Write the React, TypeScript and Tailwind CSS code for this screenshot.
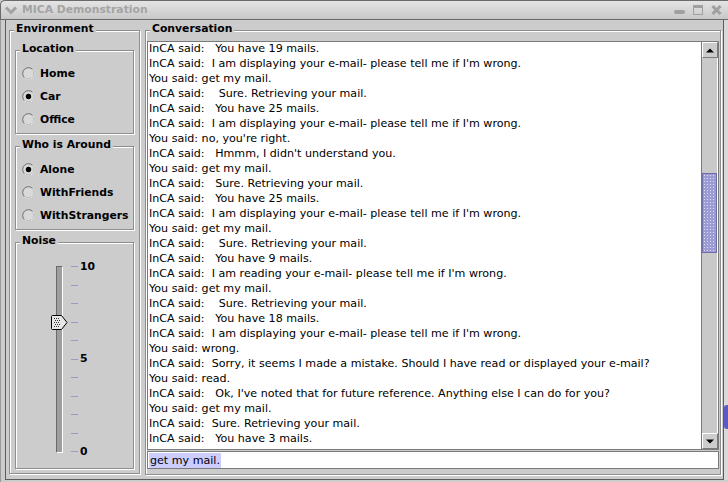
import React from "react";

const LINES = [
  "InCA said:   You have 19 mails.",
  "InCA said:  I am displaying your e-mail- please tell me if I'm wrong.",
  "You said: get my mail.",
  "InCA said:    Sure. Retrieving your mail.",
  "InCA said:   You have 25 mails.",
  "InCA said:  I am displaying your e-mail- please tell me if I'm wrong.",
  "You said: no, you're right.",
  "InCA said:   Hmmm, I didn't understand you.",
  "You said: get my mail.",
  "InCA said:   Sure. Retrieving your mail.",
  "InCA said:   You have 25 mails.",
  "InCA said:  I am displaying your e-mail- please tell me if I'm wrong.",
  "You said: get my mail.",
  "InCA said:    Sure. Retrieving your mail.",
  "InCA said:   You have 9 mails.",
  "InCA said:  I am reading your e-mail- please tell me if I'm wrong.",
  "You said: get my mail.",
  "InCA said:    Sure. Retrieving your mail.",
  "InCA said:   You have 18 mails.",
  "InCA said:  I am displaying your e-mail- please tell me if I'm wrong.",
  "You said: wrong.",
  "InCA said:  Sorry, it seems I made a mistake. Should I have read or displayed your e-mail?",
  "You said: read.",
  "InCA said:   Ok, I've noted that for future reference. Anything else I can do for you?",
  "You said: get my mail.",
  "InCA said:  Sure. Retrieving your mail.",
  "InCA said:   You have 3 mails.",
];

const TICKS = [10, 9, 8, 7, 6, 5, 4, 3, 2, 1, 0];

function Group({
  title,
  className = "",
  children,
}: {
  title: string;
  className?: string;
  children?: React.ReactNode;
}) {
  return (
    <div
      className={`relative border border-[#8e8e8e] shadow-[1px_1px_0_#fff,inset_1px_1px_0_#fff] ${className}`}
    >
      <span className="absolute left-[4px] top-[-9px] bg-[#cccccc] px-[2px] text-[10.8px] font-bold leading-[14px] whitespace-nowrap">
        {title}
      </span>
      {children}
    </div>
  );
}

function Radio({ label, checked }: { label: string; checked?: boolean }) {
  return (
    <div className="flex h-[23px] items-center gap-[5px] pl-[6px]">
      <svg width="13" height="13" viewBox="0 0 13 13">
        <circle cx="6.5" cy="6.5" r="5.8" fill="#d9d9d9" stroke="#6e6e6e" strokeWidth="1" />
        <path d="M10.7 2.3 A5.9 5.9 0 0 1 2.3 10.7" fill="none" stroke="#f4f4f4" strokeWidth="0.9" />
        {checked && <circle cx="6.5" cy="6.5" r="2.7" fill="#000" />}
      </svg>
      <span className="text-[10.8px] font-bold leading-[14px]">{label}</span>
    </div>
  );
}

function Slider() {
  return (
    <div className="flex pl-[40px] pt-[23px]">
      <div className="relative h-[187px] w-[7px] border-t border-l border-[#6a6a6a] border-r-white border-b-white border-r border-b bg-[#9e9e9e]">
        <svg
          className="absolute left-[-6px] top-[48px]"
          width="17"
          height="16"
          viewBox="0 0 17 16"
        >
          <path d="M0.5 1.5 Q0.5 0.5 1.5 0.5 H10.5 L16 7.5 L10.5 14.5 H1.5 Q0.5 14.5 0.5 13.5 Z" fill="#e6e6e6" stroke="#000" />
          {[3, 5, 7].map((x) =>
            [3, 5, 7, 9, 11].map((y) => (
              <rect key={`${x}-${y}`} x={x + (y % 4 === 1 ? 1 : 0)} y={y} width="1" height="1" fill="#333" />
            ))
          )}
        </svg>
      </div>
      <div className="ml-[8px] flex h-[186px] flex-col justify-between">
        {TICKS.map((t) => (
          <div key={t} className="flex h-px items-center gap-[2px]">
            <div className="h-px w-[7px] bg-[#9a9ac8]" />
            {t % 5 === 0 && (
              <span className="text-[10.8px] font-bold leading-[14px]">{t}</span>
            )}
          </div>
        ))}
      </div>
    </div>
  );
}

function Arrow({ up }: { up?: boolean }) {
  return (
    <div className="flex h-[16px] w-[16px] shrink-0 items-center justify-center border-t border-l border-white border-r border-b border-r-[#7a7a7a] border-b-[#7a7a7a] bg-[#cccccc]">
      <svg width="8" height="5" viewBox="0 0 8 5">
        <path d={up ? "M0 4.5 L4 0.5 L8 4.5 Z" : "M0 0.5 L4 4.5 L8 0.5 Z"} fill="#000" />
      </svg>
    </div>
  );
}

function ScrollBar() {
  return (
    <div className="flex w-[17px] shrink-0 flex-col border-l border-[#7a7a7a] bg-[#c9c9c9]">
      <Arrow up />
      <div className="flex flex-1 flex-col border-r border-white">
        <div className="h-[115px]" />
        <div className="h-[80px] border border-[#6f6fa8] bg-[#9c9cd2] bg-[radial-gradient(circle,#dcdcff_0.7px,transparent_0.9px)] bg-[length:3px_3px]" />
      </div>
      <Arrow />
    </div>
  );
}

export default function App() {
  return (
    <div className="flex h-[482px] w-[728px] flex-col overflow-hidden bg-[#cccccc] font-['DejaVu_Sans',sans-serif] text-black">
      <div className="flex h-[20px] shrink-0 items-center rounded-tl-[5px] border-t border-l border-b border-[#6a6a6a] bg-gradient-to-b from-[#e4e4e4] to-[#c8c8c8] pl-[3px] pr-[6px]">
        <svg width="14" height="10" viewBox="0 0 14 10">
          <path d="M2 2.5 L7 7.5 L12 2.5" fill="none" stroke="#a2a2a2" strokeWidth="3" />
        </svg>
        <span className="ml-[4px] text-[10.8px] font-bold leading-[14px] text-[#a4a4a4]">
          MICA Demonstration
        </span>
        <div className="ml-auto flex items-center gap-[8px]">
          <div className="mt-[4px] h-[4px] w-[11px] rounded-full bg-[#a0a0a0]" />
          <div className="h-[10px] w-[10px] border border-t-[3px] border-[#a0a0a0]" />
          <svg width="11" height="10" viewBox="0 0 11 10">
            <path d="M1.5 1 L9.5 9 M9.5 1 L1.5 9" stroke="#a0a0a0" strokeWidth="3" />
          </svg>
        </div>
      </div>
      <div className="flex flex-1 border-l border-[#9a9a9a] pl-[4px] pb-[2px]">
        <div className="flex flex-1 border-l border-r border-b border-[#5c5c5c] pt-[10px] pl-[3px] pr-[2px] pb-[4px] gap-[5px]">
          <Group title="Environment" className="mb-[1px] flex w-[131px] flex-col gap-[12px] px-[5px] pt-[19px] pb-[4px]">
            <Group title="Location" className="pt-[11px] pb-[2px]">
              <Radio label="Home" />
              <Radio label="Car" checked />
              <Radio label="Office" />
            </Group>
            <Group title="Who is Around" className="pt-[11px] pb-[2px]">
              <Radio label="Alone" checked />
              <Radio label="WithFriends" />
              <Radio label="WithStrangers" />
            </Group>
            <Group title="Noise" className="flex-1">
              <Slider />
            </Group>
          </Group>
          <Group title="Conversation" className="flex flex-1 flex-col pt-[10px] pl-[1px] pr-[1px] pb-[3px]">
            <div className="flex h-[409px] border border-[#7a7a7a]">
              <div className="flex-1 overflow-hidden bg-white pl-[1px] text-[11.1px]">
                <div className="-mt-[1px]">
                  {LINES.map((l, i) => (
                    <div key={i} className="h-[15px] leading-[15px] whitespace-pre">
                      {l}
                    </div>
                  ))}
                </div>
              </div>
              <ScrollBar />
            </div>
            <div className="mt-[1px] flex h-[18px] items-center border border-[#7a7a7a] bg-white pl-[1px]">
              <span className="bg-[#ccccff] px-[1px] text-[11.1px] leading-[15px]">get my mail.</span>
            </div>
          </Group>
        </div>
        <div className="flex w-[4px] flex-col bg-[#d9d9d9]">
          <div className="h-[385px]" />
          <div className="h-[24px] rounded-l-[3px] bg-[#5a5ac4]" />
        </div>
      </div>
    </div>
  );
}
